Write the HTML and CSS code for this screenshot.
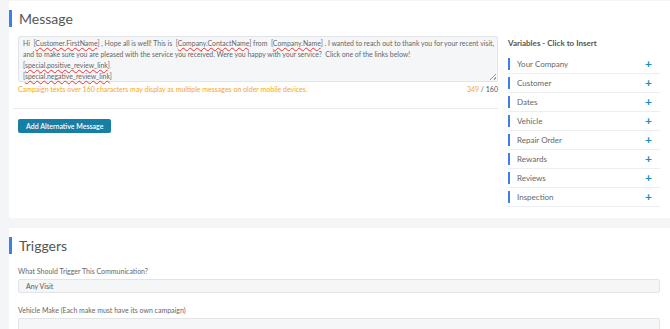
FILE: index.html
```html
<!DOCTYPE html>
<html lang="en">
<head>
  <meta charset="UTF-8" />
  <title>Campaign | Message</title>
  <link rel="stylesheet" href="styles.css">
</head>
<body>
  <div class="card">
    <h2 class="card-title">Message</h2>
    <div class="message-body">
      <div class="message-left">
        <div class="textbox">
          Hi &nbsp;[<span class="typo">Customer.FirstName</span>] , Hope all is well! This is &nbsp;[<span class="typo">Company.ContactName</span>] from &nbsp;[<span class="typo">Company.Name</span>] . I wanted to reach out to thank you for your recent visit,<br>
          and to make sure you are pleased with the service you received. Were you happy with your service? &nbsp;Click one of the links below!<br>
          [<span class="typo">special.positive_review_link</span>]<br>
          [<span class="typo">special.negative_review_link</span>]
          <span class="grip"></span>
        </div>
        <div class="hint-row">
          <span class="hint">Campaign texts over 160 characters may display as multiple messages on older mobile devices.</span>
          <span class="count"><span class="used">349</span> / 160</span>
        </div>
        <div class="divider"></div>
        <button class="btn">Add Alternative Message</button>
      </div>

      <div class="variables">
        <h3>Variables - Click to Insert</h3>
        <div class="var-item"><span>Your Company</span><span class="plus">+</span></div>
        <div class="var-item"><span>Customer</span><span class="plus">+</span></div>
        <div class="var-item"><span>Dates</span><span class="plus">+</span></div>
        <div class="var-item"><span>Vehicle</span><span class="plus">+</span></div>
        <div class="var-item"><span>Repair Order</span><span class="plus">+</span></div>
        <div class="var-item"><span>Rewards</span><span class="plus">+</span></div>
        <div class="var-item"><span>Reviews</span><span class="plus">+</span></div>
        <div class="var-item"><span>Inspection</span><span class="plus">+</span></div>
      </div>
    </div>
  </div>

  <div class="card">
    <h2 class="card-title">Triggers</h2>
    <label class="field-label">What Should Trigger This Communication?</label>
    <div class="field">Any Visit</div>
    <label class="field-label">Vehicle Make (Each make must have its own campaign)</label>
    <div class="field"></div>
  </div>
</body>
</html>
```

FILE: styles.css
```css
body {
  font-family: 'Lato', 'Open Sans', sans-serif;
  margin: 0;
  padding: 1px 0 0 9px;
  background-color: #f4f5f7;
  color: #555;
  overflow: hidden;
}

.card {
  background-color: white;
  padding: 9px 10px 11px 9px;
  margin-bottom: 10px;
}

.card-title {
  margin: 0 0 0 -9px;
  padding-left: 7px;
  border-left: 3px solid #3d7ee8;
  font-size: 14px;
  font-weight: 400;
  line-height: 17px;
  color: #555;
}

.message-body {
  display: flex;
  gap: 10px;
  margin-top: 9px;
}

.message-left {
  width: 480px;
}

.textbox {
  position: relative;
  height: 46px;
  box-sizing: border-box;
  padding: 1px 4px;
  background-color: #f5f6f8;
  border: 1px solid #e2e4e8;
  border-radius: 2px;
  font-size: 6.9px;
  line-height: 11px;
  color: #666;
  white-space: nowrap;
}

.typo {
  text-decoration: underline wavy #e33;
  text-decoration-thickness: 1px;
  text-underline-offset: 1px;
}

.grip {
  position: absolute;
  right: 1px;
  bottom: 1px;
  width: 6px;
  height: 6px;
  background: linear-gradient(135deg, transparent 45%, #999 45%, #999 55%, transparent 55%, transparent 75%, #999 75%, #999 85%, transparent 85%);
}

.hint-row {
  display: flex;
  justify-content: space-between;
  margin-top: 2px;
  font-size: 7px;
  line-height: 10px;
}

.hint {
  color: #f5a623;
}

.count {
  color: #555;
}

.count .used {
  color: #f5a623;
}

.divider {
  margin: 14px 0 10px -5px;
  border-top: 1px solid #e8eaed;
}

.btn {
  display: block;
  background-color: #177fa5;
  color: white;
  border: none;
  border-radius: 2px;
  padding: 0 8px;
  height: 14px;
  font-family: inherit;
  font-size: 7px;
  font-weight: 600;
  cursor: pointer;
}

.variables {
  flex: 1;
}

.variables h3 {
  margin: 2px 0 7px;
  font-size: 8px;
  line-height: 10px;
  font-weight: 700;
  color: #555;
}

.var-item {
  display: flex;
  justify-content: space-between;
  align-items: center;
  height: 18px;
  border-bottom: 1px solid #eceef1;
  font-size: 8px;
  color: #666;
  position: relative;
  padding: 0 8px 0 9px;
}

.var-item::before {
  content: "";
  position: absolute;
  left: 0;
  top: 3px;
  width: 2px;
  height: 12px;
  background-color: #3d7ee8;
}

.plus {
  color: #1a8cc0;
  font-size: 12px;
  font-weight: 700;
  line-height: 12px;
}

.field-label {
  display: block;
  margin-top: 12px;
  font-size: 7px;
  line-height: 10px;
  color: #666;
}

.field {
  margin-top: 3px;
  height: 14px;
  box-sizing: border-box;
  padding: 0 7px;
  background-color: #f5f6f8;
  border: 1px solid #e2e4e8;
  border-radius: 2px;
  font-size: 7px;
  line-height: 12px;
  color: #555;
}
```
